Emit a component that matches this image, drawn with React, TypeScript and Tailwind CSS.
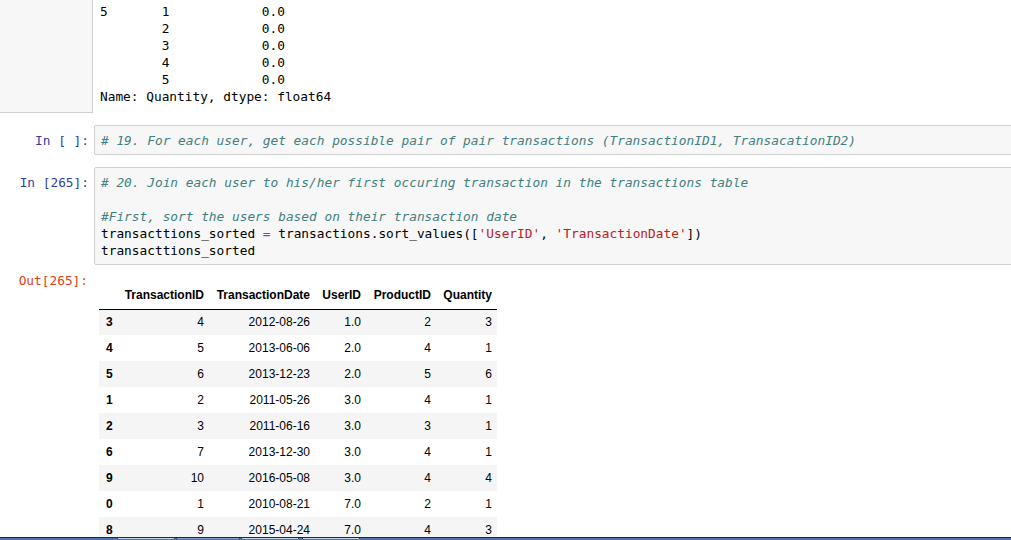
import React from 'react';

const mono = { fontFamily: '"DejaVu Sans Mono", "Liberation Mono", monospace' };

const rows: [string, string, string, string, string, string][] = [
  ['3', '4', '2012-08-26', '1.0', '2', '3'],
  ['4', '5', '2013-06-06', '2.0', '4', '1'],
  ['5', '6', '2013-12-23', '2.0', '5', '6'],
  ['1', '2', '2011-05-26', '3.0', '4', '1'],
  ['2', '3', '2011-06-16', '3.0', '3', '1'],
  ['6', '7', '2013-12-30', '3.0', '4', '1'],
  ['9', '10', '2016-05-08', '3.0', '4', '4'],
  ['0', '1', '2010-08-21', '7.0', '2', '1'],
  ['8', '9', '2015-04-24', '7.0', '4', '3'],
];

const InPrompt: React.FC<{ n: string }> = ({ n }) => (
  <div className="w-[94px] shrink-0 pr-[5px] pt-[7px] text-right text-[#303F9F] whitespace-pre" style={mono}>
    In [{n}]:
  </div>
);

const Comment: React.FC<{ children: React.ReactNode }> = ({ children }) => (
  <span className="italic text-[#408080]">{children}</span>
);

const App: React.FC = () => {
  return (
    <div className="h-[540px] w-[1011px] flex flex-col overflow-hidden bg-white text-[12.8px] leading-[17px] text-black">
      <div className="h-[537px] overflow-hidden">
        {/* previous output */}
        <div className="flex">
          <div className="w-[93px] h-[113px] shrink-0 bg-[#f7f7f7] border-r border-b border-[#cfcfcf]" />
          <pre className="ml-[7px] pt-[3px] leading-[17px]" style={mono}>
{`5       1            0.0
        2            0.0
        3            0.0
        4            0.0
        5            0.0
Name: Quantity, dtype: float64`}
          </pre>
        </div>

        {/* cell 19 */}
        <div className="flex mt-[12px]">
          <InPrompt n=" " />
          <div className="flex-1 -mr-[4px] bg-[#f7f7f7] border border-[#cfcfcf] rounded-[2px] pl-[6px] pt-[6px] pb-[5px] whitespace-pre" style={mono}>
            <Comment># 19. For each user, get each possible pair of pair transactions (TransactionID1, TransacationID2)</Comment>
          </div>
        </div>

        {/* cell 20 */}
        <div className="flex mt-[12px]">
          <InPrompt n="265" />
          <div className="flex-1 -mr-[4px] bg-[#f7f7f7] border border-[#cfcfcf] rounded-[2px] pl-[6px] pt-[6px] pb-[5px] whitespace-pre" style={mono}>
            <div><Comment># 20. Join each user to his/her first occuring transaction in the transactions table</Comment></div>
            <div>&nbsp;</div>
            <div><Comment>#First, sort the users based on their transaction date</Comment></div>
            <div>
              transacttions_sorted <span className="text-[#AA22FF]">=</span> transactions.sort_values([
              <span className="text-[#BA2121]">'UserID'</span>, <span className="text-[#BA2121]">'TransactionDate'</span>])
            </div>
            <div>transacttions_sorted</div>
          </div>
        </div>

        {/* output */}
        <div className="flex mt-[6px]">
          <div className="w-[94px] shrink-0 pr-[6px] pt-[1px] text-right text-[#D84315] whitespace-pre" style={mono}>
            Out[265]:
          </div>
          <div className="ml-[5px] pt-[12px]">
            <table
              className="table-fixed border-collapse text-[12px] text-black"
              style={{ fontFamily: '"Liberation Sans", Arial, sans-serif' }}
            >
              <colgroup>
                <col className="w-[20px]" />
                <col className="w-[90px]" />
                <col className="w-[106px]" />
                <col className="w-[51px]" />
                <col className="w-[70px]" />
                <col className="w-[61px]" />
              </colgroup>
              <thead>
                <tr className="h-[26px] border-b border-black font-bold">
                  <th />
                  <th className="text-right pr-[5px] font-bold">TransactionID</th>
                  <th className="text-right pr-[5px] font-bold">TransactionDate</th>
                  <th className="text-right pr-[5px] font-bold">UserID</th>
                  <th className="text-right pr-[5px] font-bold">ProductID</th>
                  <th className="text-right pr-[5px] font-bold">Quantity</th>
                </tr>
              </thead>
              <tbody>
                {rows.map((r, i) => (
                  <tr key={i} className={`h-[26px] ${i % 2 === 0 ? 'bg-[#f5f5f5]' : 'bg-white'}`}>
                    <td className="pl-[7px] font-bold">{r[0]}</td>
                    <td className="text-right pr-[5px]">{r[1]}</td>
                    <td className="text-right pr-[5px]">{r[2]}</td>
                    <td className="text-right pr-[5px]">{r[3]}</td>
                    <td className="text-right pr-[5px]">{r[4]}</td>
                    <td className="text-right pr-[5px]">{r[5]}</td>
                  </tr>
                ))}
              </tbody>
            </table>
          </div>
        </div>
      </div>

      {/* taskbar edge */}
      <div className="h-[3px] flex border-t border-[#1b2a44] bg-[#4f74ab]">
        <div className="w-[117px]" />
        <div className="w-[58px] h-[1px] bg-[#c9d6ea] border-x border-[#2c4670]" />
        <div className="w-[1px]" />
        <div className="w-[64px] h-[1px] bg-[#7f9cc8] border-x border-[#2c4670]" />
        <div className="w-[1px]" />
        <div className="w-[58px] h-[1px] bg-[#c9d6ea] border-x border-[#2c4670]" />
        <div className="w-[3px]" />
        <div className="w-[58px] h-[1px] bg-[#c9d6ea] border-x border-[#2c4670]" />
      </div>
    </div>
  );
};

export default App;
